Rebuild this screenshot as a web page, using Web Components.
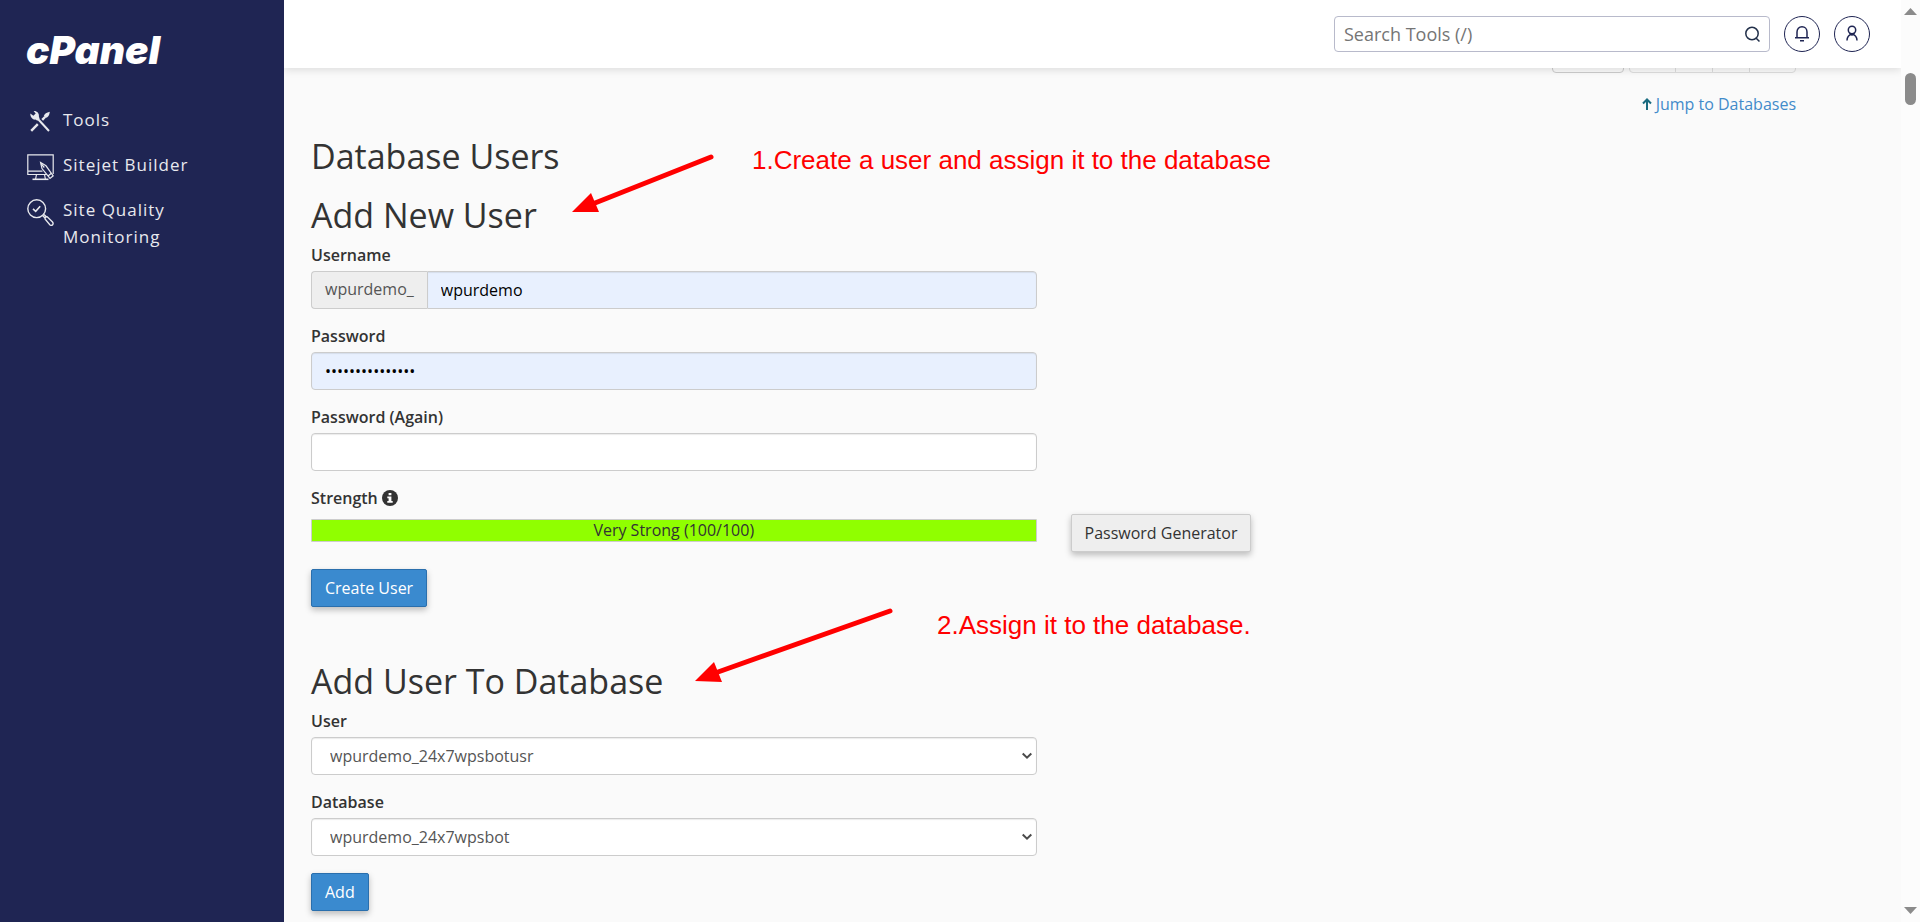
<!DOCTYPE html>
<html lang="en">
<head>
<meta charset="utf-8">
<title>cPanel - Database Users</title>
<style>
  body { margin: 0; background: #fafafa; color: #333; font: 16px/24px "Open Sans", "Noto Sans", sans-serif; }
</style>
</head>
<body>
<app-shell>
  <side-nav slot="nav">
    <nav-item icon="tools">Tools</nav-item>
    <nav-item icon="builder">Sitejet Builder</nav-item>
    <nav-item icon="quality">Site Quality Monitoring</nav-item>
  </side-nav>
  <top-bar slot="top"></top-bar>
  <database-users></database-users>
  <scroll-rail slot="rail"></scroll-rail>
</app-shell>

<script>
const define = (name, html, setup) => customElements.define(name, class extends HTMLElement {
  constructor() {
    super();
    this.attachShadow({ mode: 'open' }).innerHTML = '<style>:host,*{box-sizing:border-box}</style>' + html;
  }
  connectedCallback() { if (setup) setup(this, this.shadowRoot); }
});

/* ---------- layout ---------- */
define('app-shell', `
<style>
  :host { display: grid; grid-template-columns: 284px minmax(0, 1fr) 19px; min-height: 100vh; }
  .body { overflow: hidden; display: flex; flex-direction: column; }
</style>
<slot name="nav"></slot>
<div class="body"><slot name="top"></slot><slot></slot></div>
<slot name="rail"></slot>`);

define('scroll-rail', `
<style>
  :host { display: flex; flex-direction: column; align-items: center; height: 100vh; position: sticky; top: 0; background: #fcfcfc; padding: 8px 0; }
  .thumb { width: 11px; height: 32px; border-radius: 6px; background: #8b8b8b; margin: 58px 0 auto; }
  svg { display: block; fill: #8b8b8b; }
</style>
<svg width="13" height="7" aria-hidden="true"><path d="M6.5 0 13 7H0z"/></svg>
<div class="thumb"></div>
<svg width="13" height="7" aria-hidden="true"><path d="M0 0H13L6.5 7z"/></svg>`);

/* ---------- sidebar ---------- */
define('side-nav', `
<style>
  :host { display: block; background: #1f2553; color: #e8e9ee; padding: 32px 27px; }
  svg { display: block; overflow: visible; }
  text { font: italic 900 39px Inter, sans-serif; fill: #fff; }
  nav { display: grid; gap: 18px; margin-top: 38px; }
</style>
<svg width="134" height="36" role="img" aria-label="cPanel"><text x="-1" y="32">cPanel</text></svg>
<nav><slot></slot></nav>`);

const navIcons = {
  tools: `<g transform="translate(0 -2)"><g fill="none" stroke="currentColor" stroke-width="2">
    <path d="M10.5 11.5 22 24"/>
    <path d="M4.2 23.8 10.8 17.2" stroke-width="2.4"/>
    <path d="M15.2 12.8 18 10" stroke-width="2.4"/></g>
    <path fill="currentColor" d="M3.300 6.500 6.400 8.700 8.700 6.600 6.600 4.100C9.900 3.800 12.400 6.300 11.900 9.600L12.600 11.800 10.200 13.800 8.700 12.600C5.600 13 3.200 10.200 3.300 6.500Z"/>
    <path fill="currentColor" d="M16.800 8.900C17.500 7 19.500 5.400 22.800 4.800 22.600 8 21 10.700 18.600 11.100Z"/></g>`,
  builder: `<g fill="none" stroke="currentColor" stroke-width="1.2">
    <path d="M20 20.500H.800V.800H26.200V20M.800 17.200H15.500M9.500 20.500 8.600 25M17.500 20.500 18.400 25"/>
    <path d="M5.500 25.300H21.500" stroke-width="1.600"/>
    <path fill="#1f2553" d="M13.600 8.500 15 14.600 23 24.500 26.200 21.800 19 11.800Z"/>
    <path d="M21 22 24.400 19.200M14 9.500 17.300 13.500"/></g>`,
  quality: `<g fill="none" stroke="currentColor" stroke-width="1.400">
    <circle cx="9.700" cy="9.700" r="8.900"/>
    <path d="M6 9.800 8.700 12.300 13.200 7.300" stroke-width="1.600"/>
    <path d="M15.600 16.500 18 19M17 15.400 19.300 17.700M18.200 20.200C17.600 18.600 19 17.300 20.500 18L25.500 23C27 25 25.200 27.200 23 26Z"/></g>`
};
define('nav-item', `
<style>
  :host { display: block; }
  a { display: flex; align-items: flex-start; gap: 9px; color: inherit; text-decoration: none; font-size: 17px; line-height: 27px; letter-spacing: 1px; }
  svg { flex: none; margin: 3px 0 -3px; }
</style>
<a href="#"><svg width="27" height="27" aria-hidden="true"></svg><span><slot></slot></span></a>`,
(el, root) => { root.querySelector('svg').innerHTML = navIcons[el.getAttribute('icon')]; });

/* ---------- header ---------- */
define('top-bar', `
<style>
  :host { display: flex; flex: none; align-items: flex-start; justify-content: flex-end; gap: 14px; height: 68px; padding: 16px 31px; background: #fff; box-shadow: 0 2px 8px rgba(0,0,0,.12); position: relative; z-index: 1; }
  .search { display: flex; align-items: center; width: 436px; height: 36px; border: 1px solid #b8bacb; border-radius: 4px; padding-right: 8px; background: #fff; }
  input { flex: 1; min-width: 0; border: 0; outline: 0; background: none; padding: 0 9px; height: 34px; font: 18px "Open Sans", sans-serif; color: #333; }
  input::placeholder { color: #757575; opacity: 1; }
  button { padding: 0; border: 0; background: none; color: #1f2553; display: grid; place-items: center; }
  .round { width: 36px; height: 36px; border: 1px solid #1f2553; border-radius: 50%; }
  svg { fill: none; stroke: currentColor; stroke-width: 1.500; }
</style>
<div class="search">
  <input type="text" placeholder="Search Tools (/)" aria-label="Search Tools">
  <button aria-label="Search"><svg width="17" height="17" style="color:#22304a"><circle cx="8" cy="7.500" r="6.200"/><path d="M12.200 12.200 15.500 15.500"/></svg></button>
</div>
<button class="round" aria-label="Notifications"><svg width="16" height="18"><path d="M1 12.800H15M3 12.500V7C3 4 5 1.800 8 1.800S13 4 13 7V12.500M6 15.700H10"/></svg></button>
<button class="round" aria-label="Account"><svg width="14" height="18"><circle cx="7" cy="5" r="3.700"/><path d="M2 15.500C2 11.500 4 9.800 7 8.700 10 9.800 12 11.500 12 15.500M4.500 8 7 10 9.500 8"/></svg></button>`);

/* ---------- form pieces ---------- */
const fieldCss = `
  :host { display: block; margin-bottom: 15px; }
  label { display: block; font-weight: 600; margin-bottom: 4px; }
  input, select { display: block; width: 100%; min-width: 0; height: 38px; border: 1px solid #ccc; border-radius: 4px; background: #fff; padding: 0 12px; font: 16px "Open Sans", sans-serif; color: #555; box-shadow: inset 0 1px 1px rgba(0,0,0,.08); }
`;
define('text-field', `
<style>${fieldCss}
  .group { display: flex; }
  .prefix { display: none; }
  :host([prefix]) .prefix { display: block; border: 1px solid #ccc; border-right: 0; border-radius: 4px 0 0 4px; background: #eee; color: #555; padding: 0 13px; line-height: 34px; }
  :host([prefix]) input { border-radius: 0 4px 4px 0; }
  :host([filled]) input { background: #e8f0fe; color: #000; }
  input { padding: 0 13px; }
</style>
<label for="c"></label>
<div class="group"><span class="prefix"></span><input id="c"></div>`,
(el, root) => {
  const input = root.querySelector('input');
  root.querySelector('label').textContent = el.getAttribute('label');
  root.querySelector('.prefix').textContent = el.getAttribute('prefix') || '';
  input.type = el.getAttribute('type') || 'text';
  input.value = el.getAttribute('value') || '';
});

define('select-field', `
<style>${fieldCss}
  .box { position: relative; }
  select { appearance: none; padding: 0 30px 0 18px; }
  svg { position: absolute; right: 5px; top: 15px; fill: none; stroke: #4a4a4a; stroke-width: 2; pointer-events: none; }
</style>
<label for="c"></label>
<div class="box"><select id="c"><option></option></select><svg width="10" height="8" aria-hidden="true"><path d="M.7 1.500 5 5.700 9.300 1.500"/></svg></div>`,
(el, root) => {
  root.querySelector('label').textContent = el.getAttribute('label');
  root.querySelector('option').textContent = el.getAttribute('value');
});

define('strength-meter', `
<style>
  :host { display: block; height: 23px; line-height: 21px; border: 1px solid #ccc; border-radius: 1px; background: #90ff00; text-align: center; color: #333; }
</style>
<slot></slot>`);

define('ui-button', `
<style>
  :host { display: inline-block; vertical-align: top; }
  button { display: block; height: 38px; padding: 0 13px; border: 1px solid #ccc; border-radius: 2px; background: #eee; color: #333; font: 16px "Open Sans", sans-serif; box-shadow: 0 3px 6px rgba(0,0,0,.25); }
  :host([primary]) button { background: #3a8acf; border-color: #2a6fad; color: #fff; }
</style>
<button type="button"><slot></slot></button>`);

define('callout-note', `
<style>
  :host { display: block; position: absolute; white-space: nowrap; color: #f00; font: 26px/30px "Liberation Sans", Arial, sans-serif; }
</style>
<slot></slot>`);

/* ---------- page ---------- */
define('database-users', `
<style>
  :host { display: block; padding: 0 105px 11px 27px; }
  .pager { display: flex; justify-content: flex-end; margin-top: -33px; }
  .pager button { width: 38px; height: 38px; margin-left: -1px; border: 1px solid #ddd; background: #fafafa; }
  .pager .size { width: 72px; margin: 0 5px 0 0; border-color: #ccc; border-radius: 4px; }
  .pager .first { width: 47px; border-radius: 0 0 0 4px; margin-left: 0; }
  .pager .last { width: 47px; border-radius: 0 0 4px 0; }
  .jump { display: flex; justify-content: flex-end; margin-top: 19px; }
  .jump a { display: flex; align-items: center; gap: 4px; color: #428bca; text-decoration: none; }
  h2 { margin: 0; font-size: 34px; line-height: 36px; font-weight: 400; }
  .title { margin-top: 22px; }
  section { position: relative; margin-top: 23px; }
  section + section { margin-top: 56px; }
  section h2 { margin-bottom: 10px; }
  .cols { display: grid; grid-template-columns: 1fr 1fr; column-gap: 34px; }
  .strength { display: flex; align-items: center; gap: 4px; font-weight: 600; margin-bottom: 4px; }
  strength-meter { margin-top: 5px; }
  .actions { margin-top: 17px; }
  section + section .actions { margin-top: 2px; }
  .arrow { position: absolute; fill: #f00; }
  .arrow path:first-child { stroke: #f00; stroke-width: 5; stroke-linecap: round; }
  .a1 { left: 260px; top: -45px; } .n1 { left: 441px; top: -52px; }
  .a2 { left: 383px; top: -56px; } .n2 { left: 626px; top: -53px; }
</style>
<div class="pager">
  <button class="size" aria-label="Page size"></button>
  <button class="first" aria-label="First page"></button><button aria-label="Previous page"></button><button aria-label="Next page"></button><button class="last" aria-label="Last page"></button>
</div>
<div class="jump"><a href="#"><svg width="10" height="12" aria-hidden="true"><path d="M5 12V2M1 5.500 5 1.500 9 5.500" fill="none" stroke="#1a6b80" stroke-width="2"/></svg>Jump to Databases</a></div>
<h2 class="title">Database Users</h2>
<section>
  <h2>Add New User</h2>
  <div class="cols">
    <form>
      <text-field label="Username" prefix="wpurdemo_" value="wpurdemo" filled></text-field>
      <text-field label="Password" type="password" value="abcdefghijklmno" filled></text-field>
      <text-field label="Password (Again)" type="password"></text-field>
    </form>
  </div>
  <div class="strength">Strength <svg width="16" height="16" role="img" aria-label="Information"><circle cx="8" cy="8" r="8" fill="#333"/><path fill="#fff" d="M6.600 3H9.400V5.300H6.600ZM5.300 6.400H9.400V11H10.700V12.800H5.300V11H6.600V8.200H5.300Z"/></svg></div>
  <div class="cols">
    <strength-meter>Very Strong (100/100)</strength-meter>
    <div><ui-button>Password Generator</ui-button></div>
  </div>
  <div class="actions"><ui-button primary>Create User</ui-button></div>
  <svg class="arrow a1" width="145" height="64" aria-hidden="true"><path d="M140 5 24 51"/><path d="M1 60 20 41 28 60Z"/></svg>
  <callout-note class="n1">1.Create a user and assign it to the database</callout-note>
</section>
<section>
  <h2>Add User To Database</h2>
  <div class="cols">
    <form>
      <select-field label="User" value="wpurdemo_24x7wpsbotusr"></select-field>
      <select-field label="Database" value="wpurdemo_24x7wpsbot"></select-field>
    </form>
  </div>
  <div class="actions"><ui-button primary>Add</ui-button></div>
  <svg class="arrow a2" width="202" height="78" aria-hidden="true"><path d="M196 4 24 65"/><path d="M1 74 20 55 28 75Z"/></svg>
  <callout-note class="n2">2.Assign it to the database.</callout-note>
</section>`);
</script>
</body>
</html>
